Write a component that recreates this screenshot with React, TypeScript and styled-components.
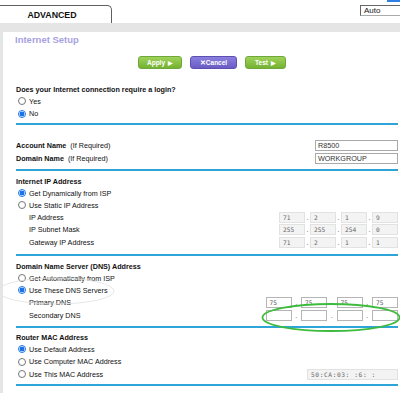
import styled, { createGlobalStyle } from "styled-components";

const GlobalStyle = createGlobalStyle`
  html, body {
    margin: 0;
    padding: 0;
    background: #fff;
  }
  body {
    font-family: "Liberation Sans", Arial, sans-serif;
    color: #222;
  }
`;

const Page = styled.div`
  position: relative;
  width: 400px;
  height: 393px;
  overflow: hidden;
  background: #fff;
`;

const TopBar = styled.div`
  display: flex;
  justify-content: space-between;
  height: 23px;
`;

const Tab = styled.div`
  margin-top: 5px;
  margin-left: -8px;
  width: 120px;
  height: 18px;
  box-sizing: border-box;
  border: 1px solid #5f5f5f;
  border-bottom: none;
  border-top-right-radius: 5px;
  display: flex;
  align-items: center;
  justify-content: center;
  font-weight: bold;
  font-size: 8.8px;
  color: #111;
`;

const SelectArea = styled.div`
  display: flex;
  flex-direction: column;
  align-items: flex-end;
`;

const BlueMark = styled.div`
  width: 13px;
  height: 2px;
  background: #2f7fe6;
`;

const AutoSelect = styled.div`
  margin-top: 3px;
  margin-right: -2px;
  width: 42px;
  height: 11px;
  box-sizing: border-box;
  border: 1px solid #aaa;
  border-top-color: #666;
  border-left-color: #666;
  padding-left: 3px;
  font-size: 8px;
  line-height: 9px;
  color: #111;
`;

const GrayBand = styled.div`
  height: 9px;
  background: #e5e5e5;
`;

const Body = styled.div`
  display: flex;
  height: 361px;
`;

const LeftStrip = styled.div`
  width: 3px;
  background: #e5e5e5;
`;

const Panel = styled.div`
  flex: 1;
  padding: 0 2px 0 13px;
  display: flex;
  flex-direction: column;
`;

const Title = styled.div`
  height: 16px;
  line-height: 16px;
  margin-left: -1px;
  font-size: 9.5px;
  font-weight: bold;
  color: #a99fe2;
`;

const ButtonRow = styled.div`
  display: flex;
  gap: 8px;
  margin-top: 8px;
  height: 13px;
  padding-left: 122px;
`;

const Button = styled.div<{ $w: number; $kind: "green" | "purple" }>`
  width: ${({ $w }) => $w}px;
  height: 13px;
  border-radius: 3px;
  box-sizing: border-box;
  display: flex;
  align-items: center;
  justify-content: center;
  gap: 3px;
  color: #fff;
  font-size: 6.5px;
  font-weight: bold;
  background: ${({ $kind }) =>
    $kind === "green"
      ? "linear-gradient(#9fd25a, #74b232)"
      : "linear-gradient(#8a7fe0, #6a5cc4)"};
  border: 1px solid ${({ $kind }) => ($kind === "green" ? "#6ea83a" : "#5b50b0")};
`;

const Arrow = styled.span`
  font-size: 6px;
`;

const Heading = styled.div<{ $h: number; $mt?: number }>`
  height: ${({ $h }) => $h}px;
  margin-top: ${({ $mt }) => $mt ?? 0}px;
  display: flex;
  align-items: center;
  font-size: 7.2px;
  font-weight: bold;
  color: #111;
`;

const RadioRow = styled.div<{ $h: number }>`
  height: ${({ $h }) => $h}px;
  display: flex;
  align-items: center;
  gap: 3px;
  padding-left: 2px;
  font-size: 7.2px;
  color: #111;
`;

const Radio = styled.span<{ $checked?: boolean }>`
  width: 8px;
  height: 8px;
  box-sizing: border-box;
  border-radius: 50%;
  border: 1px solid ${({ $checked }) => ($checked ? "#1a73e8" : "#777")};
  background: ${({ $checked }) =>
    $checked ? "radial-gradient(circle, #1a73e8 0 2.4px, #fff 2.6px)" : "#fff"};
`;

const FieldRow = styled.div<{ $h: number; $indent?: number }>`
  height: ${({ $h }) => $h}px;
  display: flex;
  align-items: center;
  justify-content: space-between;
  padding-left: ${({ $indent }) => $indent ?? 0}px;
  font-size: 7.2px;
  color: #111;
`;

const Light = styled.span`
  font-weight: normal;
  margin-left: 4px;
`;

const Divider = styled.div<{ $mt: number }>`
  height: 2px;
  margin-top: ${({ $mt }) => $mt}px;
  background: #2ea4d8;
`;

const TextBox = styled.div<{ $w: number }>`
  width: ${({ $w }) => $w}px;
  height: 11px;
  box-sizing: border-box;
  border: 1px solid #a9a9a9;
  padding-left: 2px;
  font-size: 7.2px;
  line-height: 9px;
  color: #333;
  background: #fff;
`;

const OctetGroup = styled.div`
  display: flex;
  align-items: center;
`;

const Octet = styled.div<{ $disabled?: boolean }>`
  width: 26px;
  height: 11px;
  box-sizing: border-box;
  border: 1px solid ${({ $disabled }) => ($disabled ? "#e2e2e2" : "#b5b5b5")};
  background: ${({ $disabled }) => ($disabled ? "#f3f3f3" : "#fff")};
  padding-left: 3px;
  font-family: "DejaVu Sans Mono", "Liberation Mono", monospace;
  font-size: 6.2px;
  line-height: 9px;
  color: ${({ $disabled }) => ($disabled ? "#666" : "#555")};
`;

const Dot = styled.span<{ $w: number }>`
  width: ${({ $w }) => $w}px;
  text-align: center;
  font-size: 7px;
  line-height: 11px;
  color: #555;
`;

const MacBox = styled(Octet)`
  width: 91px;
  letter-spacing: 0.6px;
`;

const Annotation = styled.svg`
  position: absolute;
  left: 261px;
  top: 302px;
  width: 142px;
  height: 32px;
  overflow: visible;
`;

const FaintMark = styled.svg`
  position: absolute;
  left: 0;
  top: 276px;
  width: 116px;
  height: 30px;
  overflow: visible;
`;

function Octets({ values, disabled, dot }: { values: string[]; disabled?: boolean; dot: number }) {
  return (
    <OctetGroup>
      {values.map((v, i) => (
        <OctetGroup key={i}>
          {i > 0 && <Dot $w={dot}>.</Dot>}
          <Octet $disabled={disabled}>{v}</Octet>
        </OctetGroup>
      ))}
    </OctetGroup>
  );
}

export default function App() {
  return (
    <Page>
      <GlobalStyle />
      <TopBar>
        <Tab>ADVANCED</Tab>
        <SelectArea>
          <BlueMark />
          <AutoSelect>Auto</AutoSelect>
        </SelectArea>
      </TopBar>
      <GrayBand />
      <Body>
        <LeftStrip />
        <Panel>
          <Title>Internet Setup</Title>
          <ButtonRow>
            <Button $w={44} $kind="green">
              Apply <Arrow>▶</Arrow>
            </Button>
            <Button $w={47} $kind="purple">
              ✕Cancel
            </Button>
            <Button $w={41} $kind="green">
              Test <Arrow>▶</Arrow>
            </Button>
          </ButtonRow>

          <Heading $h={12} $mt={14}>Does your Internet connection require a login?</Heading>
          <RadioRow $h={12}>
            <Radio />
            Yes
          </RadioRow>
          <RadioRow $h={13}>
            <Radio $checked />
            No
          </RadioRow>
          <Divider $mt={3} />

          <FieldRow $h={13} style={{ marginTop: 14 }}>
            <b>
              Account Name<Light>(If Required)</Light>
            </b>
            <TextBox $w={83}>R8500</TextBox>
          </FieldRow>
          <FieldRow $h={13}>
            <b>
              Domain Name<Light>(If Required)</Light>
            </b>
            <TextBox $w={83}>WORKGROUP</TextBox>
          </FieldRow>
          <Divider $mt={4} />

          <Heading $h={12} $mt={4}>Internet IP Address</Heading>
          <RadioRow $h={12}>
            <Radio $checked />
            Get Dynamically from ISP
          </RadioRow>
          <RadioRow $h={12}>
            <Radio />
            Use Static IP Address
          </RadioRow>
          <FieldRow $h={12} $indent={13}>
            <span>IP Address</span>
            <Octets values={["71", "2", "1", "9"]} disabled dot={5} />
          </FieldRow>
          <FieldRow $h={13} $indent={13}>
            <span>IP Subnet Mask</span>
            <Octets values={["255", "255", "254", "0"]} disabled dot={5} />
          </FieldRow>
          <FieldRow $h={13} $indent={13}>
            <span>Gateway IP Address</span>
            <Octets values={["71", "2", "1", "1"]} disabled dot={5} />
          </FieldRow>
          <Divider $mt={5} />

          <Heading $h={12} $mt={4}>Domain Name Server (DNS) Address</Heading>
          <RadioRow $h={12}>
            <Radio />
            Get Automatically from ISP
          </RadioRow>
          <RadioRow $h={12}>
            <Radio $checked />
            Use These DNS Servers
          </RadioRow>
          <FieldRow $h={13} $indent={13}>
            <span>Primary DNS</span>
            <Octets values={["75", "75", "75", "75"]} dot={9.5} />
          </FieldRow>
          <FieldRow $h={13} $indent={13}>
            <span>Secondary DNS</span>
            <Octets values={["", "", "", ""]} dot={9.5} />
          </FieldRow>
          <Divider $mt={4} />

          <Heading $h={12} $mt={3}>Router MAC Address</Heading>
          <RadioRow $h={12}>
            <Radio $checked />
            Use Default Address
          </RadioRow>
          <RadioRow $h={13}>
            <Radio />
            Use Computer MAC Address
          </RadioRow>
          <FieldRow $h={12}>
            <RadioRow $h={12}>
              <Radio />
              Use This MAC Address
            </RadioRow>
            <MacBox $disabled>50:CA:03:  :6: :</MacBox>
          </FieldRow>
          <Divider $mt={4} />
        </Panel>
      </Body>

      <FaintMark viewBox="0 0 116 30">
        <ellipse cx="56" cy="15" rx="58" ry="13" fill="none" stroke="rgba(225,225,225,0.8)" strokeWidth="1" />
      </FaintMark>
      <Annotation viewBox="0 0 142 32">
        <ellipse cx="70" cy="15.5" rx="68.5" ry="13.5" fill="none" stroke="#3dbb3d" strokeWidth="1.8" />
      </Annotation>
    </Page>
  );
}
